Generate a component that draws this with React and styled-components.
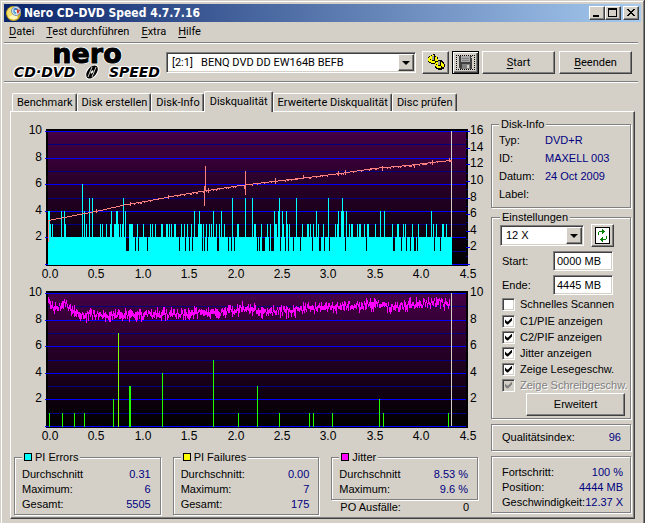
import React, { useState } from 'react';
import styled, { createGlobalStyle, css } from 'styled-components';

const GlobalStyle = createGlobalStyle`
    * {
        box-sizing: border-box;
    }

    body {
        margin: 0;
        background: #d4d0c8;
        color: #000;
        font: 11px/15px 'Liberation Sans', Arial, sans-serif;
    }

    button, input, select {
        font: inherit;
        color: inherit;
        border-radius: 0;
        margin: 0;
    }
`;

const raised = css`
    border: 1px solid;
    border-color: #fff #404040 #404040 #fff;
    box-shadow: inset -1px -1px 0 #808080;
    background: #d4d0c8;
`;

const sunken = css`
    border: 1px solid;
    border-color: #808080 #fff #fff #808080;
    box-shadow: inset 1px 1px 0 #404040, inset -1px -1px 0 #d4d0c8;
    background: #fff;
`;

const uiFont = css`
    font-family: Roboto, 'Liberation Sans', sans-serif;
`;

/* ---------- window ---------- */

const Window = styled.div`
    min-height: 100vh;
    padding: 4px;
    background: #d4d0c8;
    box-shadow: inset -1px -1px 0 #404040, inset 1px 1px 0 #d4d0c8,
        inset -2px -2px 0 #808080, inset 2px 2px 0 #fff;
`;

const TitleBar = styled.header`
    display: flex;
    align-items: center;
    gap: 2px;
    height: 18px;
    padding: 0 2px;
    background: linear-gradient(to right, #0a246a, #a6caf0);
    color: #fff;
`;

const Title = styled.h1`
    flex: 1;
    margin: 0;
    font: bold 12px/18px 'DejaVu Sans Condensed', 'DejaVu Sans', sans-serif;
    white-space: nowrap;
`;

const WindowButtons = styled.div`
    display: flex;
`;

const WindowButton = styled.button`
    ${raised}
    display: flex;
    width: 16px;
    height: 14px;
    padding: 0;
    margin-left: ${props => (props.$apart ? '2px' : '0')};
`;

const Menu = styled.nav`
    ${uiFont}
    display: flex;
    gap: 12px;
    height: 20px;
    padding: 0 5px;
    line-height: 20px;
    a {
        color: inherit;
        text-decoration: none;
    }
    u {
        text-underline-offset: 2px;
    }
`;

const Separator = styled.hr`
    height: 2px;
    margin: 0 3px 0 0;
    border: 0;
    border-top: 1px solid #808080;
    border-bottom: 1px solid #fff;
`;

/* ---------- toolbar ---------- */

const Toolbar = styled.div`
    ${uiFont}
    display: flex;
    align-items: center;
    height: 37px;
    padding: 0 9px 0 10px;
`;

const Logo = styled.div`
    width: 146px;
    margin-right: 6px;
    text-shadow: 1px 1px 0 #fff, -1px -1px 0 #fff, 1px -1px 0 #fff, -1px 1px 0 #fff;
`;

const LogoName = styled.div`
    height: 19px;
    font: bold 27px/16px 'DejaVu Sans', sans-serif;
    text-align: center;
    -webkit-text-stroke: 1px #000;
`;

const LogoProduct = styled.div`
    display: flex;
    align-items: center;
    justify-content: space-between;
    height: 14px;
    font: italic bold 14px/14px 'DejaVu Sans', sans-serif;
`;

const ComboBox = styled.div`
    ${sunken}
    position: relative;
    flex: ${props => (props.$wide ? '1' : '0 0 84px')};
    height: 21px;
    select {
        appearance: none;
        width: 100%;
        height: 100%;
        padding: 0 20px 0 5px;
        border: 0;
        outline: 0;
        background: transparent;
    }
`;

const ComboArrow = styled.span`
    ${raised}
    position: absolute;
    top: 1px;
    right: 1px;
    bottom: 1px;
    width: 16px;
    display: flex;
    align-items: center;
    justify-content: center;
    pointer-events: none;
    &::after {
        content: '';
        border: 4px solid transparent;
        border-top-color: #000;
        border-bottom: 0;
    }
`;

const ToolButtons = styled.div`
    display: flex;
    align-items: center;
    gap: 4px;
    margin-left: 6px;
`;

const Button = styled.button`
    ${raised}
    display: flex;
    align-items: center;
    justify-content: center;
    width: 73px;
    height: 23px;
    padding: 0;
    u {
        text-underline-offset: 2px;
    }
`;

const IconButton = styled(Button)`
    width: 27px;
    margin-right: -1px;
    ${props => props.$active && css`
        border-color: #000;
        box-shadow: inset 1px 1px 0 #fff, inset -1px -1px 0 #404040, inset -2px -2px 0 #808080;
    `}
`;

/* ---------- tabs ---------- */

const Tabs = styled.div`
    ${uiFont}
    display: flex;
    align-items: flex-end;
    height: 20px;
    margin: 8px 6px 0;
    padding-left: 2px;
`;

const Tab = styled.button`
    height: 18px;
    padding: 0 3px 0 4px;
    border: 1px solid;
    border-color: #fff #404040 transparent #fff;
    border-bottom: 0;
    border-radius: 2px 2px 0 0;
    box-shadow: inset -1px 0 0 #808080;
    background: #d4d0c8;
    line-height: 17px;
    white-space: nowrap;
    ${props => props.$selected && css`
        position: relative;
        height: 21px;
        padding: 0 4px 2px 5px;
        margin-bottom: -1px;
    `}
`;

const Panel = styled.main`
    display: grid;
    grid-template-columns: minmax(0, 1fr) 140px;
    gap: 5px;
    margin: 0 6px 2px;
    padding: 0 3px 3px;
    border: 1px solid;
    border-color: #fff #404040 #404040 #fff;
    box-shadow: inset -1px -1px 0 #808080;
`;

const Charts = styled.section`
    padding-top: 10px;
`;

const ChartSvg = styled.svg`
    display: block;
    width: 100%;
    text {
        font: 12px 'Liberation Sans', Arial, sans-serif;
    }
`;

/* ---------- groups ---------- */

const Stats = styled.div`
    display: grid;
    grid-template-columns: repeat(3, 1fr);
    gap: 12px;
    align-items: start;
    margin-top: 5px;
    padding-right: 8px;
`;

const Group = styled.fieldset`
    min-width: 0;
    margin: 0;
    padding: ${props => props.$pad};
    border: 1px solid #808080;
    box-shadow: 1px 1px 0 #fff, inset 1px 1px 0 #fff;
`;

const Legend = styled.legend`
    display: flex;
    align-items: center;
    gap: 3px;
    height: 12px;
    padding: 0 2px;
    background: #d4d0c8;
    line-height: 12px;
`;

const Swatch = styled.span`
    width: 8px;
    height: 8px;
    border: 1px solid #000;
    background: ${props => props.$color};
`;

const Row = styled.div`
    display: flex;
    justify-content: space-between;
    line-height: 15px;
    white-space: nowrap;
    padding: ${props => (props.$inset ? '0 9px' : '0')};
`;

const Value = styled.span`
    color: ${props => (props.$plain ? '#000' : '#000080')};
`;

const Side = styled.aside`
    display: flex;
    flex-direction: column;
    padding-top: 6px;
    ${Group} + ${Group} {
        margin-top: 5px;
    }
    ${Group}:nth-child(2) {
        margin-top: 3px;
    }
`;

const InfoList = styled.dl`
    display: grid;
    grid-template-columns: 46px 1fr;
    margin: 0;
    line-height: 18px;
    dd {
        margin: 0;
        color: #000080;
    }
`;

const SpeedRow = styled.div`
    display: flex;
    align-items: center;
    justify-content: space-between;
    padding-right: 11px;
`;

const RefreshButton = styled(Button)`
    width: 23px;
`;

const Field = styled.div`
    display: flex;
    align-items: center;
    justify-content: space-between;
    margin-top: 4px;
    padding: 0 12px 0 2px;
    input {
        ${sunken}
        width: 60px;
        height: 20px;
        padding: 0 3px;
        outline: 0;
    }
`;

const Checks = styled.div`
    display: grid;
    grid-template-rows: 18px;
    grid-auto-rows: 16px;
    padding-left: 2px;
`;

const Check = styled.label`
    display: flex;
    align-items: center;
    gap: 5px;
    white-space: nowrap;
    ${props => props.$disabled && css`
        color: #808080;
        text-shadow: 1px 1px 0 #fff;
    `}
    input {
        ${sunken}
        appearance: none;
        display: flex;
        align-items: center;
        justify-content: center;
        flex: none;
        width: 13px;
        height: 13px;
    }
    input:checked::after {
        content: '';
        width: 7px;
        height: 7px;
        background: #000;
        clip-path: polygon(0 2px, 2px 4px, 3px 4px, 7px 0, 7px 3px, 3px 7px, 2px 7px, 0 5px);
    }
    input:disabled {
        background: #d4d0c8;
    }
    input:disabled::after {
        background: #808080;
    }
`;

const Advanced = styled(Button)`
    width: 99px;
    margin-left: auto;
`;

/* ---------- chart data ---------- */

// one sample per pixel column, counted from the left of the plot
const BASE_LEVEL = 2;
const SAMPLES = 404;

const pieLevels = {
    1: [78, 79, 80, 87, 90, 99, 131, 137, 141, 144, 154, 156, 159, 169, 170, 180, 183, 186, 209, 211,
        214, 215, 216, 221, 223, 224, 225, 232, 237, 240, 245, 252, 264, 271, 272, 276, 281, 297, 318,
        345, 346, 353, 358, 362, 366, 367, 369, 386, 392],
    3: [2, 4, 17, 38, 52, 54, 58, 62, 66, 67, 70, 72, 74, 81, 82, 83, 84, 89, 95, 102, 104, 107, 113,
        114, 118, 119, 121, 123, 126, 127, 133, 136, 139, 143, 150, 152, 153, 155, 158, 161, 163, 168,
        171, 176, 189, 190, 206, 207, 213, 219, 222, 227, 228, 235, 239, 241, 254, 259, 260, 262, 265,
        270, 275, 287, 289, 301, 303, 304, 309, 311, 312, 316, 319, 320, 327, 344, 349, 350, 355, 357,
        364, 370, 378, 385, 388, 394, 395, 398],
    4: [0, 1, 13, 16, 36, 63, 68, 69, 77, 146, 151, 165, 173, 226, 230, 234, 238, 268, 290, 293, 295,
        298, 332, 336, 383],
    5: [41, 44, 75, 184, 197, 204, 231, 248, 280, 294],
    6: [34],
};

const pifBars = [
    [1, 1], [14, 1], [26, 1], [36, 1], [65, 2], [70, 7], [81, 3], [82, 3], [114, 4], [165, 5], [190, 1],
    [209, 3], [231, 1], [261, 1], [265, 1], [284, 1], [331, 2], [335, 1], [400, 1],
];

const speedPoints = [
    [0, 98], [26, 93], [52, 88], [78, 82], [102, 78], [128, 73], [152, 69], [192, 63], [225, 59],
    [259, 55], [292, 51], [325, 46], [359, 43], [392, 39], [403, 38],
];

const speedSpikes = [
    [0, 98, 120], [156, 64, 84], [157, 44, 68], [160, 66, 71], [196, 63, 67], [197, 49, 73], [227, 56, 62],
    [255, 53, 57], [290, 49, 54], [297, 48, 53], [334, 44, 49], [366, 42, 46], [384, 38, 43], [401, 36, 40],
    [120, 73, 77], [82, 80, 84], [48, 87, 91],
];

const jitterPoints = [
    [0, 19], [3, 22], [8, 25], [12, 22], [17, 20], [22, 25], [30, 31], [50, 31], [90, 31], [130, 30],
    [170, 28], [195, 25], [215, 27], [245, 27], [265, 24], [290, 22], [315, 22], [330, 19], [342, 24],
    [370, 20], [390, 18], [401, 20],
];

const valueAt = (points, x) => {
    const i = Math.max(1, points.findIndex(p => p[0] >= x));
    const [x0, y0] = points[i - 1];
    const [x1, y1] = points[i];
    return y0 + ((y1 - y0) * (x - x0)) / (x1 - x0);
};

// small fixed-seed generator so that the noise stays the same on every render
const makeRandom = seed => () => {
    seed = (seed * 16807) % 2147483647;
    return seed / 2147483647;
};

const LEFT = 34;
const RIGHT = 452;
const TOP = 9;
const BOTTOM = 142;
const CURSOR = 437;
const levelY = level => Math.round(BOTTOM - (level * (BOTTOM - TOP)) / 10);

const pieHeights = Array(SAMPLES).fill(BASE_LEVEL);
Object.entries(pieLevels).forEach(([level, columns]) => {
    columns.forEach(x => {
        pieHeights[x] = Number(level);
    });
});

const piePath = pieHeights
    .map((level, x) => `M${LEFT + x} ${BOTTOM + 1}V${levelY(level)}h1V${BOTTOM + 1}z`)
    .join('');

const speedPath = (() => {
    const random = makeRandom(77);
    let path = '';
    for (let x = 0; x < SAMPLES; x++) {
        const y = Math.round(valueAt(speedPoints, x));
        const bump = x > 80 && random() > 0.75 ? 1 : 0;
        path += `M${LEFT + x} ${y}h1v${1 + bump}h-1z`;
    }
    speedSpikes.forEach(([x, from, to]) => {
        path += `M${LEFT + x} ${from}h1V${to}h-1z`;
    });
    return path;
})();

const jitterPath = (() => {
    const random = makeRandom(4217);
    let path = '';
    for (let x = 0; x < 402; x++) {
        const middle = valueAt(jitterPoints, x) + (random() - 0.5) * 6;
        const size = 3 + random() * random() * 10;
        const from = Math.round(middle - size / 2);
        path += `M${LEFT + x} ${from}h1v${Math.round(size)}h-1z`;
    }
    return path;
})();

/* ---------- charts ---------- */

function Chart({ id, label, rightMax, rightTicks, children }) {
    const rightStep = ((BOTTOM - TOP) * 2) / rightMax;
    return (
        <ChartSvg viewBox="0 0 472 162" role="img" aria-label={label}>
            <defs>
                <linearGradient id={id} x1="0" y1="0" x2="0" y2="1">
                    <stop offset="0" stopColor="#440044" />
                    <stop offset="1" stopColor="#000" />
                </linearGradient>
            </defs>
            <g shapeRendering="crispEdges">
                <rect x="32" y="7" width="422" height="137" fill="#000" />
                <rect x={LEFT} y={TOP} width={RIGHT - LEFT} height={BOTTOM - TOP} fill={`url(#${id})`} />
                {[1, 3, 5, 7, 9].map(level => (
                    <rect key={level} x={LEFT} y={levelY(level)} width={RIGHT - LEFT} height="1" fill="#000080" />
                ))}
                {[0, 2, 4, 6, 8, 10].map(level => (
                    <rect key={level} x="31" y={levelY(level)} width={RIGHT - 31} height="1" fill="#0000ff" />
                ))}
                {rightTicks && Array.from({ length: rightMax + 1 }, (_, i) => (
                    <rect
                        key={i}
                        x={RIGHT}
                        y={Math.round(BOTTOM - (i * rightStep) / 2)}
                        width={i % 2 ? 2 : 4}
                        height="1"
                        fill={i % 2 ? '#000080' : '#0000ff'}
                    />
                ))}
                {children}
            </g>
            {[2, 4, 6, 8, 10].map(level => (
                <text key={level} x="28" y={levelY(level) + 3} textAnchor="end">{level}</text>
            ))}
            {Array.from({ length: rightMax / 2 }, (_, i) => (
                <text key={i} x="456" y={Math.round(BOTTOM - (i + 1) * rightStep) + 3}>{(i + 1) * 2}</text>
            ))}
            {Array.from({ length: 10 }, (_, i) => (
                <text key={i} x={Math.round(36 + i * 46.4)} y="156" textAnchor="middle">{(i / 2).toFixed(1)}</text>
            ))}
        </ChartSvg>
    );
}

/* ---------- icons ---------- */

const AppIcon = () => (
    <svg width="16" height="16" viewBox="0 0 16 16" aria-hidden="true">
        <circle cx="7.5" cy="8.5" r="7.5" fill="#c8a820" />
        <circle cx="7" cy="8" r="6" fill="#f4e070" />
        <path d="M2 12q5 5 10 1l-3-4z" fill="#fff6b8" />
        <circle cx="10" cy="6" r="4.5" fill="#d8e4f0" stroke="#8090a8" />
        <path d="M7 4q3-2 5 0l-2 2z" fill="#3078c8" />
        <path d="M11 4l3 1-2 4-2-3z" fill="#d04030" />
        <path d="M7 5l3 1v3q-3 0-3-4z" fill="#50a8d8" />
        <circle cx="10" cy="6" r="1" fill="#fff" />
    </svg>
);

const MinimizeIcon = () => (
    <svg width="14" height="12" viewBox="0 0 14 12" shapeRendering="crispEdges" aria-hidden="true">
        <path d="M3 8h6v2H3z" />
    </svg>
);

const MaximizeIcon = () => (
    <svg width="14" height="12" viewBox="0 0 14 12" shapeRendering="crispEdges" aria-hidden="true">
        <path d="M2 1h9v9H2zM3 3v6h7V3z" fillRule="evenodd" />
    </svg>
);

const CloseIcon = () => (
    <svg width="14" height="12" viewBox="0 0 14 12" shapeRendering="crispEdges" aria-hidden="true">
        <path d="M3 2h2v1h1v1h2V3h1V2h2v1h-1v1H9v1H8v1h1v1h1v1h1v1H9V8H8V7H6v1H5v1H3V8h1V7h1V6h1V5H5V4H4V3H3z" />
    </svg>
);

const DiscIcon = () => (
    <svg width="18" height="16" viewBox="0 0 18 16" aria-hidden="true">
        <ellipse cx="9" cy="8" rx="5" ry="8" transform="rotate(38 9 8)" fill="#000" stroke="#fff" />
        <path d="M5 13L9 3M9 13l4-10" fill="none" stroke="#d4d0c8" />
        <ellipse cx="9" cy="8" rx="1" ry="2" transform="rotate(38 9 8)" fill="#fff" />
    </svg>
);

const GearsIcon = () => (
    <svg width="18" height="17" viewBox="0 0 18 17" shapeRendering="crispEdges" aria-hidden="true">
        <path d="M2 2h2V1h2V0h2v2h2v1h1v5h-1v1H8v1H4V9H2V8H1V3h1z" fill="#000" />
        <path d="M1 4h1V3h1V2h2V1h2v2h2V2h1v3h1v3H9V7H8v2H4V8H2V7H1z" fill="#ffff00" />
        <path d="M5 2h2v4H5z" fill="#a0a0a0" />
        <path d="M7 3h1v4H5V6h2zM3 5h1v1H3zM2 8h2v1H2z" fill="#000" />
        <path d="M9 7h2V6h4v1h1v1h1v2h1v3h-1v2h-2v1h-4v-1H9v-1H8V9h1z" fill="#000" />
        <path d="M8 9h1V8h2V7h2v1h2v1h1v1h1v3h-2v-1h-1v2h-4v-1H9v-1H8z" fill="#ffff00" />
        <path d="M11 7h2v4h-2z" fill="#a0a0a0" />
        <path d="M13 8h1v4h-3v-1h2zM9 10h1v1H9zM14 13h1v1h-1z" fill="#000" />
    </svg>
);

const SaveIcon = () => (
    <svg width="21" height="17" viewBox="0 0 21 17" shapeRendering="crispEdges" aria-hidden="true">
        <path d="M1 1.5h18M1 15.5h18M1.5 1v15M19.5 1v15" stroke="#000" strokeDasharray="1 1" />
        <path d="M4 2h13v13H5l-1-1z" fill="#404040" />
        <path d="M6 2h9v6H6z" fill="#a8a8a8" />
        <path d="M7 4h7v1H7zM7 6h7v1H7z" fill="#808080" />
        <path d="M7 10h8v5H7z" fill="#808080" />
        <path d="M12 11h2v3h-2z" fill="#d4d0c8" />
        <path d="M16 3h1v1h-1z" fill="#d4d0c8" />
    </svg>
);

const RefreshIcon = () => (
    <svg width="15" height="17" viewBox="0 0 15 17" shapeRendering="crispEdges" aria-hidden="true">
        <path d="M0 0h15v17H0z" />
        <path d="M1 1h13v15H1z" fill="#fff" />
        <path d="M3 5h1V4h3V2h1v1h1v1h1v1H9v1H8v1H7V5H4v3H3zM12 9h-1v3H8v-2H7v1H6v1H5v1h1v1h1v1h1v-2h3v-1h1z" fill="#008000" />
    </svg>
);

/* ---------- app ---------- */

const tabs = ['Benchmark', 'Disk erstellen', 'Disk-Info', 'Diskqualität', 'Erweiterte Diskqualität', 'Disc prüfen'];

const menuItems = ['Datei', 'Test durchführen', 'Extra', 'Hilfe'];

const checks = [
    { label: 'Schnelles Scannen' },
    { label: 'C1/PIE anzeigen', on: true },
    { label: 'C2/PIF anzeigen', on: true },
    { label: 'Jitter anzeigen', on: true },
    { label: 'Zeige Lesegeschw.', on: true },
    { label: 'Zeige Schreibgeschw.', on: true, disabled: true },
];

const Mnemonic = ({ text }) => (
    <span><u>{text[0]}</u>{text.slice(1)}</span>
);

function StatGroup({ title, color, rows }) {
    return (
        <Group $pad="4px 9px 2px 7px">
            <Legend><Swatch $color={color} />{title}</Legend>
            {rows.map(([name, value]) => (
                <Row key={name}><span>{name}</span><Value>{value}</Value></Row>
            ))}
        </Group>
    );
}

function App() {
    const [tab, setTab] = useState('Diskqualität');

    return (
        <Window>
            <GlobalStyle />
            <TitleBar>
                <AppIcon />
                <Title>Nero CD-DVD Speed 4.7.7.16</Title>
                <WindowButtons>
                    <WindowButton aria-label="Minimieren"><MinimizeIcon /></WindowButton>
                    <WindowButton aria-label="Maximieren"><MaximizeIcon /></WindowButton>
                    <WindowButton aria-label="Schließen" $apart><CloseIcon /></WindowButton>
                </WindowButtons>
            </TitleBar>
            <Menu>
                {menuItems.map(item => (
                    <a key={item} href="#menu"><Mnemonic text={item} /></a>
                ))}
            </Menu>
            <Separator />
            <Toolbar>
                <Logo>
                    <LogoName>nero</LogoName>
                    <LogoProduct><span>CD·DVD</span><DiscIcon /><span>SPEED</span></LogoProduct>
                </Logo>
                <ComboBox $wide>
                    <select aria-label="Laufwerk">
                        <option>{'[2:1]\u00a0\u00a0\u00a0BENQ DVD DD EW164B BEFB'}</option>
                    </select>
                    <ComboArrow />
                </ComboBox>
                <ToolButtons>
                    <IconButton aria-label="Optionen"><GearsIcon /></IconButton>
                    <IconButton aria-label="Speichern" $active><SaveIcon /></IconButton>
                    <Button><Mnemonic text="Start" /></Button>
                    <Button><Mnemonic text="Beenden" /></Button>
                </ToolButtons>
            </Toolbar>
            <Separator />
            <Tabs role="tablist">
                {tabs.map(name => (
                    <Tab
                        key={name}
                        role="tab"
                        aria-selected={name === tab}
                        $selected={name === tab}
                        onClick={() => setTab(name)}
                    >
                        {name}
                    </Tab>
                ))}
            </Tabs>
            <Panel>
                <Charts>
                    <Chart id="pie" label="PI Errors" rightMax={16} rightTicks>
                        <rect x={CURSOR} y={TOP} width="1" height="120" fill="#d4d0c8" />
                        <path d={piePath} fill="#00ffff" />
                        <path d={speedPath} fill="#ff8080" />
                    </Chart>
                    <Chart id="pif" label="PI Failures, Jitter" rightMax={10}>
                        {pifBars.map(([x, level]) => (
                            <rect
                                key={x}
                                x={LEFT + x}
                                y={levelY(level)}
                                width="1"
                                height={BOTTOM + 1 - levelY(level)}
                                fill={level > 6 ? '#80ff00' : '#20ff00'}
                            />
                        ))}
                        <path d={jitterPath} fill="#ff00ff" />
                        <rect x={CURSOR} y={TOP} width="1" height={BOTTOM - TOP} fill="#d4d0c8" />
                    </Chart>
                    <Stats>
                        <StatGroup
                            title="PI Errors"
                            color="#00ffff"
                            rows={[['Durchschnitt', '0.31'], ['Maximum:', '6'], ['Gesamt:', '5505']]}
                        />
                        <StatGroup
                            title="PI Failures"
                            color="#ffff00"
                            rows={[['Durchschnitt:', '0.00'], ['Maximum:', '7'], ['Gesamt:', '175']]}
                        />
                        <div>
                            <StatGroup
                                title="Jitter"
                                color="#ff00ff"
                                rows={[['Durchschnitt', '8.53 %'], ['Maximum:', '9.6 %']]}
                            />
                            <Row $inset><span>PO Ausfälle:</span><Value $plain>0</Value></Row>
                        </div>
                    </Stats>
                </Charts>
                <Side>
                    <Group $pad="1px 7px 4px">
                        <Legend>Disk-Info</Legend>
                        <InfoList>
                            <dt>Typ:</dt><dd>DVD+R</dd>
                            <dt>ID:</dt><dd>MAXELL 003</dd>
                            <dt>Datum:</dt><dd>24 Oct 2009</dd>
                            <dt>Label:</dt><dd />
                        </InfoList>
                    </Group>
                    <Group $pad="1px 5px 2px 8px">
                        <Legend>Einstellungen</Legend>
                        <SpeedRow>
                            <ComboBox>
                                <select aria-label="Geschwindigkeit">
                                    <option>12 X</option>
                                </select>
                                <ComboArrow />
                            </ComboBox>
                            <RefreshButton aria-label="Aktualisieren"><RefreshIcon /></RefreshButton>
                        </SpeedRow>
                        <Field>
                            <label htmlFor="start">Start:</label>
                            <input id="start" defaultValue="0000 MB" />
                        </Field>
                        <Field>
                            <label htmlFor="end">Ende:</label>
                            <input id="end" defaultValue="4445 MB" />
                        </Field>
                        <Checks>
                            {checks.map(({ label, on, disabled }) => (
                                <Check key={label} $disabled={disabled}>
                                    <input type="checkbox" defaultChecked={on} disabled={disabled} />
                                    {label}
                                </Check>
                            ))}
                        </Checks>
                        <Advanced>Erweitert</Advanced>
                    </Group>
                    <Group $pad="5px 9px 5px 10px">
                        <Row><span>Qualitätsindex:</span><Value>96</Value></Row>
                    </Group>
                    <Group $pad="8px 7px 2px 10px">
                        <Row><span>Fortschritt:</span><Value>100 %</Value></Row>
                        <Row><span>Position:</span><Value>4444 MB</Value></Row>
                        <Row><span>Geschwindigkeit:</span><Value>12.37 X</Value></Row>
                    </Group>
                </Side>
            </Panel>
        </Window>
    );
}

export default App;
